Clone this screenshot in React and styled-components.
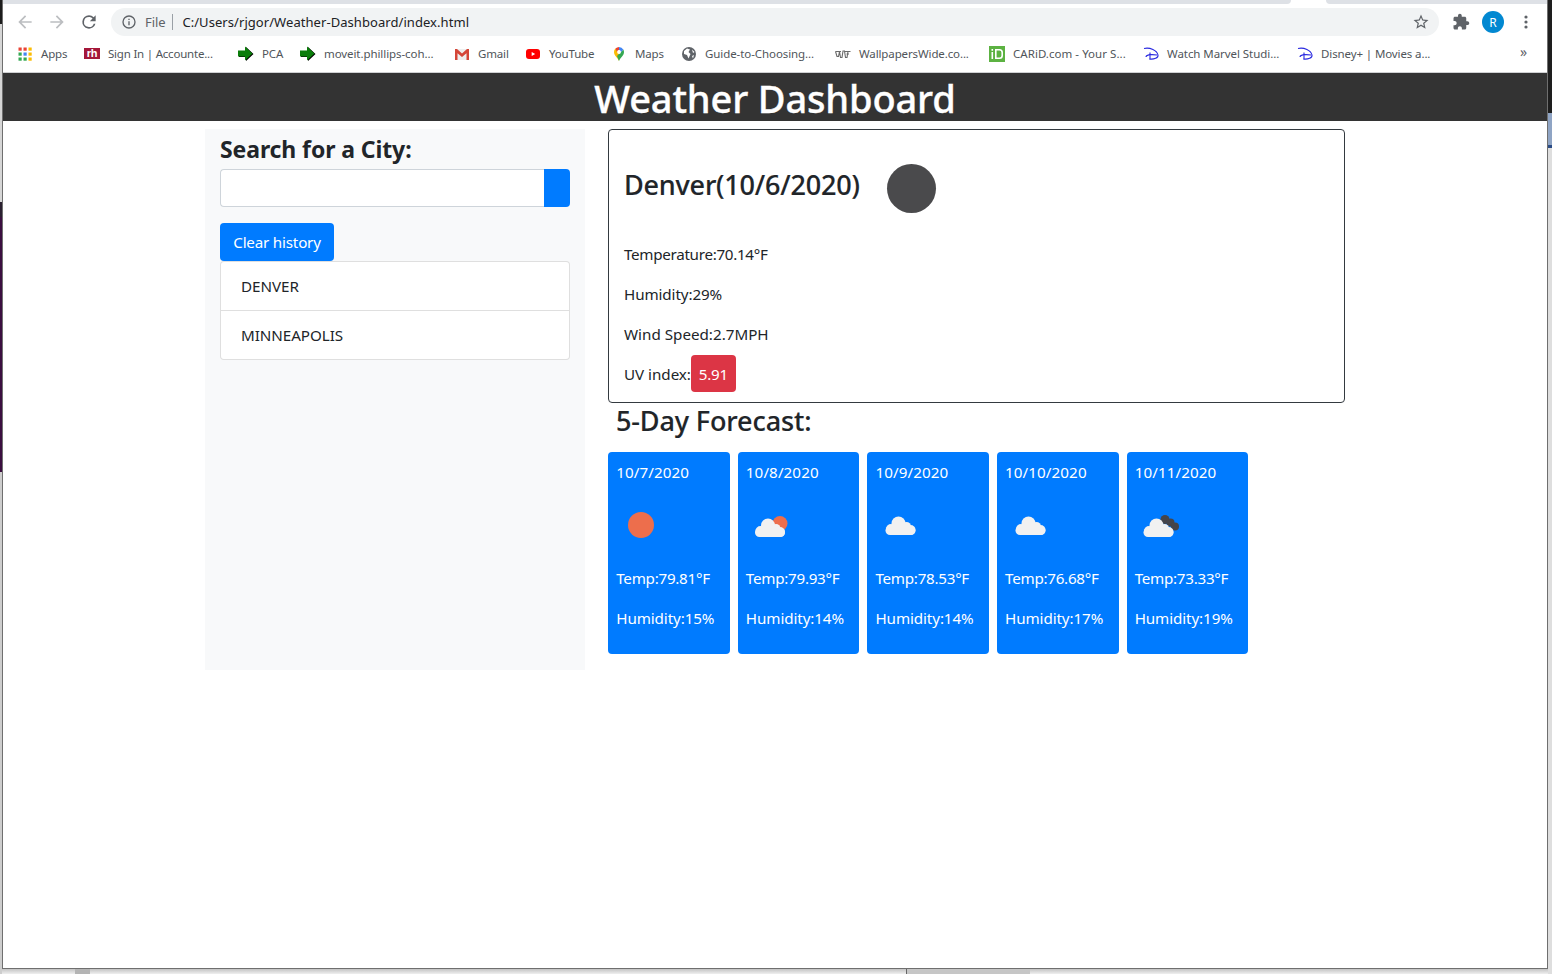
import React from "react";
import styled, { createGlobalStyle } from "styled-components";

const Global = createGlobalStyle`
  html, body { margin: 0; padding: 0; background: #fff; overflow: hidden; }
  * { box-sizing: border-box; }
  #root { height: 974px; width: 1552px; }
`;

const FONT = `"Noto Sans", "Open Sans", "Liberation Sans", sans-serif`;

const Desktop = styled.div`
  display: grid; grid-template-columns: 2px 1fr 4px; width: 1552px; height: 974px; font-family: ${FONT};
`;
const Edge = styled.div`display: flex; flex-direction: column; height: 974px;`;
const EdgePiece = styled.div`flex: ${p => p.$h ? `0 0 ${p.$h}px` : "1"}; background: ${p => p.$c};`;
const Center = styled.div`display: flex; flex-direction: column; height: 974px;`;
const Window = styled.div`
  flex: 1; display: flex; flex-direction: column; background: #fff; min-height: 0;
  border: 1px solid #6f6f6f; border-top: 0;
`;
const BottomEdge = styled.div`display: flex; height: 5px; background: linear-gradient(#c4c4c4, #efefef);`;
const BottomPiece = styled.div`
  flex: ${p => p.$w ? `0 0 ${p.$w}px` : "1"};
  background: ${p => p.$c || "transparent"};
  ${p => p.$line ? "border-left: 1px solid #666;" : ""}
`;

const TabStrip = styled.div`display: flex; height: 4px; background: #fff;`;
const TabFill = styled.div`
  flex: ${p => p.$w ? `0 0 ${p.$w}px` : "1"}; background: #dee1e6;
  border-radius: ${p => p.$r};
`;
const ActiveTab = styled.div`flex: 0 0 35px;`;

const Toolbar = styled.div`
  display: flex; align-items: center; height: 32px; padding: 4px 5px 0 6px; background: #fff;
`;
const ToolBtn = styled.div`
  flex: 0 0 32px; height: 28px; display: flex; align-items: center; justify-content: center;
  margin-left: ${p => p.$gap || 0}px;
`;
const Omnibox = styled.div`
  flex: 1; height: 28px; margin: 0 6px; padding: 0 9px 0 10px; border-radius: 14px; background: #f1f3f4;
  display: flex; align-items: center;
`;
const FileLabel = styled.span`
  font-size: 13px; color: #5f6368; margin-left: 8px; letter-spacing: -0.1px;
`;
const OmniSep = styled.span`width: 1px; height: 16px; background: #9aa0a6; margin: 0 9px 0 7px;`;
const Url = styled.span`font-size: 13px; color: #202124; flex: 1; white-space: nowrap; letter-spacing: 0.06px;`;
const Avatar = styled.div`
  width: 22px; height: 22px; border-radius: 50%; background: #0288d1; color: #fff; font-size: 12px;
  display: flex; align-items: center; justify-content: center;
`;

const Bookmarks = styled.div`
  display: flex; align-items: center; height: 37px; padding: 0 0 1px 14px; background: #fff;
  border-bottom: 1px solid #cfd0d2;
`;
const Bookmark = styled.div`
  flex: ${p => p.$w ? `0 0 ${p.$w}px` : "1"}; display: flex; align-items: center; gap: 8px; white-space: nowrap;
  font-size: 11.5px; color: #50555a; letter-spacing: ${p => p.$ls ?? -0.08}px;
`;
const BmIcon = styled.span`flex: 0 0 16px; width: 16px; height: 16px; display: flex; align-items: center; justify-content: center;`;
const More = styled.span`
  flex: 0 0 27px; font-size: 14px; color: #5f6368; line-height: 1; margin-bottom: 3px;
`;

const Header = styled.header`
  height: 48px; background: #333; color: #fff; text-align: center; font-size: 38px; font-weight: 500;
  line-height: 50px; letter-spacing: -0.15px; -webkit-text-stroke: 0.35px #fff;
`;
const Container = styled.main`
  width: 1140px; margin: 0 auto; padding-top: 8px; display: flex; align-items: flex-start; color: #212529;
`;
const Sidebar = styled.aside`
  flex: 0 0 380px; height: 541px; background: #f8f9fa; padding: 6px 15px 0;
`;
const SearchTitle = styled.h2`
  margin: 0 0 5px; font-size: 23px; line-height: 28px; font-weight: 700; letter-spacing: -0.1px; padding-bottom: 1px;
`;
const SearchRow = styled.div`display: flex; height: 38px; margin-bottom: 16px;`;
const SearchInput = styled.input`
  flex: 1; min-width: 0; border: 1px solid #ced4da; border-right: 0; border-radius: 4px 0 0 4px; background: #fff;
`;
const SearchButton = styled.button`
  flex: 0 0 26px; border: 0; padding: 0; background: #007bff; border-radius: 0 4px 4px 0;
`;
const ClearButton = styled.button`
  display: block; height: 38px; width: 114px; border: 0; padding: 0; border-radius: 4px; background: #007bff; color: #fff;
  font-family: ${FONT}; font-size: 15.2px; letter-spacing: -0.2px;
`;
const CityList = styled.ul`
  list-style: none; margin: 0; padding: 0; background: #fff; border: 1px solid rgba(0,0,0,.125); border-radius: 4px;
`;
const CityItem = styled.li`
  height: ${p => p.$last ? 48 : 49}px; padding: 0 20px; display: flex; align-items: center; font-size: 15.2px; letter-spacing: -0.05px;
  ${p => p.$last ? "" : "border-bottom: 1px solid rgba(0,0,0,.125);"}
`;

const Content = styled.section`flex: 1; padding-left: 23px; display: flex; flex-direction: column;`;
const CurrentCard = styled.div`
  height: 274px; border: 1px solid #343a40; border-radius: 4px; padding: 33px 16px 0 15px; display: flex; flex-direction: column;
`;
const TitleRow = styled.div`display: flex; align-items: center; height: 50px; margin-bottom: 29px;`;
const CityTitle = styled.h2`
  flex: 0 0 263px; margin: 0 0 6px; font-size: 27px; font-weight: 500; line-height: 34px; letter-spacing: -0.2px; white-space: nowrap;
  -webkit-text-stroke: 0.15px #212529;
`;
const Moon = styled.div`width: 49px; height: 49px; border-radius: 50%; background: #4a4a4c;`;
const Stat = styled.p`
  margin: 0 0 16px; height: 24px; line-height: 24px; font-size: 15.2px; letter-spacing: ${p => p.$ls}px; display: flex; align-items: center; white-space: nowrap;
`;
const UvBadge = styled.span`
  flex: none; display: flex; align-items: center; justify-content: center; width: 45px; height: 37px; margin-top: -1px; border-radius: 4px;
  background: #dc3545; color: #fff; letter-spacing: -0.25px;
`;
const ForecastTitle = styled.h2`
  margin: 0 0 13px 8px; height: 36px; font-size: 27px; font-weight: 500; line-height: 36px; letter-spacing: -0.12px;
  -webkit-text-stroke: 0.15px #212529;
`;
const ForecastGrid = styled.div`display: grid; grid-template-columns: repeat(5, 1fr); gap: 8px; width: 640px; margin-left: 0.25px;`;
const DayCard = styled.article`
  height: 202px; background: #007bff; color: #fff; border-radius: 4px; padding: 8px; font-size: 15.2px; white-space: nowrap;
`;
const DayLine = styled.p`margin: 0 0 16px; line-height: 24px; height: 24px; letter-spacing: ${p => p.$ls}px;`;
const DayIcon = styled.div`height: 50px; margin: 0 0 16px;`;

const Mat = ({ d, c = "#5f6368", s = 20 }) => (
  <svg width={s} height={s} viewBox="0 0 24 24" fill={c}><path d={d} /></svg>
);
const BACK = "M20 11H7.83l5.59-5.59L12 4l-8 8 8 8 1.41-1.41L7.83 13H20v-2z";
const FWD = "M4 11h12.17l-5.59-5.59L12 4l8 8-8 8-1.41-1.41L16.17 13H4v-2z";
const RELOAD = "M17.65 6.35A7.96 7.96 0 0 0 12 4a8 8 0 1 0 7.74 10h-2.08A6 6 0 1 1 12 6c1.66 0 3.14.69 4.22 1.78L13 11h7V4l-2.35 2.35z";
const INFO = "M11 7h2v2h-2V7zm0 4h2v6h-2v-6zm1-9a10 10 0 1 0 0 20 10 10 0 0 0 0-20zm0 18a8 8 0 1 1 0-16 8 8 0 0 1 0 16z";
const STAR = "M22 9.24l-7.19-.62L12 2 9.19 8.63 2 9.24l5.46 4.73L5.82 21 12 17.27 18.18 21l-1.63-7.03L22 9.24zM12 15.4l-3.76 2.27 1-4.28-3.32-2.88 4.38-.38L12 6.1l1.71 4.04 4.38.38-3.32 2.88 1 4.28L12 15.4z";
const PUZZLE = "M20.5 11H19V7c0-1.1-.9-2-2-2h-4V3.5C13 2.12 11.88 1 10.5 1S8 2.12 8 3.5V5H4c-1.1 0-1.99.9-1.99 2v3.8H3.5c1.49 0 2.7 1.21 2.7 2.7s-1.21 2.7-2.7 2.7H2V20c0 1.1.9 2 2 2h3.8v-1.5c0-1.49 1.21-2.7 2.7-2.7 1.49 0 2.7 1.21 2.7 2.7V22H17c1.1 0 2-.9 2-2v-4h1.5c1.38 0 2.5-1.12 2.5-2.5S21.88 11 20.5 11z";

const AppsIcon = () => {
  const seq = ["#ea4335","#ea4335","#fbbc04","#34a853","#4285f4","#fbbc04","#34a853","#34a853","#fbbc04"];
  return (
    <svg width="14" height="14" viewBox="0 0 14 14">
      {seq.map((c, i) => <rect key={i} x={(i % 3) * 5 + 0.5} y={Math.floor(i / 3) * 5 + 0.5} width="3.2" height="3.2" fill={c} />)}
    </svg>
  );
};
const RhIcon = () => (
  <svg width="16" height="16" viewBox="0 0 16 16">
    <rect y="2" width="16" height="11" fill="#a4173a" />
    <text x="8" y="11" textAnchor="middle" fontFamily="Liberation Sans" fontWeight="700" fontSize="11" fill="#fff">rh</text>
  </svg>
);
const ArrowIcon = () => (
  <svg width="16" height="16" viewBox="0 0 16 16">
    <path d="M1 5h7V1l7.5 7L8 15v-4H1z" fill="#000" />
    <path d="M0 4.5h7V0.5l7.5 7L7 14.5v-4H0z" fill="#0a7d0a" />
  </svg>
);
const GmailIcon = () => (
  <svg width="16" height="16" viewBox="0 0 16 16">
    <path d="M1 3h14v11H1z" fill="#eee" />
    <path d="M1 3h2l5 4.5L13 3h2v11h-2.5V7.2L8 11 3.500 7.200V14H1z" fill="#d44638" />
  </svg>
);
const YtIcon = () => (
  <svg width="16" height="16" viewBox="0 0 16 16">
    <rect x="1" y="3" width="14" height="10" rx="3" fill="#f00" />
    <path d="M6.700 6l3.500 2-3.500 2z" fill="#fff" />
  </svg>
);
const MapsIcon = () => (
  <svg width="16" height="16" viewBox="0 0 16 16">
    <path d="M8 15C6.500 11.500 3 9.500 3 6a5 5 0 0 1 1.500-3.500L8 6z" fill="#fbbc04" />
    <path d="M8 15c1.500-3.500 5-5.500 5-9a5 5 0 0 0-.7-2.500L6 10z" fill="#34a853" />
    <path d="M4.500 2.500A5 5 0 0 1 8 1v3L6 6z" fill="#ea4335" />
    <path d="M8 1a5 5 0 0 1 4.300 2.500L10 6 8 4z" fill="#4285f4" />
    <circle cx="8" cy="6" r="1.900" fill="#fff" />
  </svg>
);
const GlobeIcon = () => (
  <svg width="16" height="16" viewBox="0 0 16 16">
    <circle cx="8" cy="8" r="7" fill="#5f6368" />
    <path d="M3 5l3-2.500 3 1-1.500 2.500 2 2-2 4.500-1.500-3.500L3 8zM11 3.500l2.500 2.500-1.500 1zM11 10l2-1-1 3.500z" fill="#fff" />
  </svg>
);
const WpIcon = () => (
  <svg width="16" height="16" viewBox="0 0 16 16" fill="none" stroke="#6a6a6a" strokeWidth="1.100">
    <path d="M.5 5.500l1.500 5h1.500l1-5 1 6h1.500l1-6.500h1.500l1 6.500h1.500l1-6" />
    <path d="M.5 5.500h5.500M10 5.500h5.500M11.500 8h2.500" />
  </svg>
);
const IdIcon = () => (
  <svg width="16" height="16" viewBox="0 0 16 16">
    <rect width="16" height="16" fill="#5cb242" />
    <rect x="2.500" y="6" width="1.600" height="7" fill="#fff" />
    <rect x="2.500" y="3" width="1.600" height="1.800" fill="#fff" />
    <path d="M6 3h4.500A3.500 3.500 0 0 1 14 6.500v3a3.500 3.500 0 0 1-3.500 3.500H6zm1.600 1.600v6.800h2.900a1.900 1.900 0 0 0 1.900-1.900v-3a1.900 1.900 0 0 0-1.900-1.900z" fill="#fff" />
  </svg>
);
const DisneyIcon = () => (
  <svg width="16" height="16" viewBox="0 0 16 16" fill="none" stroke="#2a2ae0" strokeWidth="1.100">
    <path d="M1 2.500c6-1.500 13 2 14 6.500.500 3-4 4.500-8.500 4" />
    <path d="M7 6.500v7M3 11c0-2 4-3 11-2" />
  </svg>
);

const SunShape = ({ x, y, r }) => <circle cx={x} cy={y} r={r} fill="#ed6e4c" />;
const CloudShape = ({ dx = 0, dy = 0, fill = "#f1f1f1" }) => (
  <g transform={`translate(${dx} ${dy})`} fill={fill}>
    <rect x="0" y="10" width="30" height="9" rx="4.500" />
    <circle cx="5.500" cy="13" r="5" />
    <circle cx="13" cy="7.500" r="7" />
    <circle cx="21" cy="10.500" r="4.500" />
    <circle cx="25" cy="14" r="5" />
  </g>
);
const WeatherIcon = ({ kind }) => (
  <svg width="50" height="50" viewBox="0 0 50 50">
    {kind === "sun" && <SunShape x={25} y={25} r={13} />}
    {kind === "few" && <>
      <SunShape x={34} y={23.500} r={7.500} />
      <CloudShape dx={9} dy={18} />
    </>}
    {kind === "cloud" && <CloudShape dx={10.500} dy={16} />}
    {kind === "broken" && <>
      <circle cx="30" cy="19.500" r="4.500" fill="#45454a" />
      <circle cx="35.500" cy="22.500" r="4" fill="#45454a" />
      <circle cx="40" cy="26.500" r="4" fill="#45454a" />
      <CloudShape dx={8.500} dy={18} />
    </>}
  </svg>
);

const bookmarks = [
  { w: 67, icon: <AppsIcon />, text: "Apps", ls: -0.16 },
  { w: 154, icon: <RhIcon />, text: "Sign In | Accounte...", ls: -0.21 },
  { w: 62, icon: <ArrowIcon />, text: "PCA", ls: -0.16 },
  { w: 154, icon: <ArrowIcon />, text: "moveit.phillips-coh..." },
  { w: 71, icon: <GmailIcon />, text: "Gmail", ls: -0.16 },
  { w: 86, icon: <YtIcon />, text: "YouTube", ls: -0.16 },
  { w: 70, icon: <MapsIcon />, text: "Maps", ls: -0.16 },
  { w: 154, icon: <GlobeIcon />, text: "Guide-to-Choosing..." },
  { w: 154, icon: <WpIcon />, text: "WallpapersWide.co...", ls: -0.12 },
  { w: 154, icon: <IdIcon />, text: "CARiD.com - Your S...", ls: 0.04 },
  { w: 154, icon: <DisneyIcon />, text: "Watch Marvel Studi...", ls: -0.06 },
  { icon: <DisneyIcon />, text: "Disney+ | Movies a...", ls: -0.11 },
];

const days = [
  { date: "10/7/2020", kind: "sun", temp: "79.81", hum: 15 },
  { date: "10/8/2020", kind: "few", temp: "79.93", hum: 14 },
  { date: "10/9/2020", kind: "cloud", temp: "78.53", hum: 14 },
  { date: "10/10/2020", kind: "cloud", temp: "76.68", hum: 17 },
  { date: "10/11/2020", kind: "broken", temp: "73.33", hum: 19 },
];

const leftEdge = [[24, "#1c1c1c"], [178, "#d6d6d6"], [15, "#2a2030"], [255, "#3a0f3f"], [0, "#cdcdcd"]];
const rightEdge = [[113, "#1e1e1e"], [32, "#8fa4c4"], [3, "#2b4c86"], [0, "#dedede"]];

export default function App() {
  return (
    <>
      <Global />
      <Desktop>
        <Edge>{leftEdge.map(([h, c], i) => <EdgePiece key={i} $h={h} $c={c} />)}</Edge>
        <Center>
          <Window>
            <TabStrip>
              <TabFill $r="0 0 6px 0" />
              <ActiveTab />
              <TabFill $w={221} $r="0 0 0 6px" />
            </TabStrip>
            <Toolbar>
              <ToolBtn><Mat d={BACK} c="#bcbec1" /></ToolBtn>
              <ToolBtn><Mat d={FWD} c="#bcbec1" /></ToolBtn>
              <ToolBtn><Mat d={RELOAD} c="#5f6368" /></ToolBtn>
              <Omnibox>
                <Mat d={INFO} c="#5f6368" s={16} />
                <FileLabel>File</FileLabel>
                <OmniSep />
                <Url>C:/Users/rjgor/Weather-Dashboard/index.html</Url>
                <Mat d={STAR} c="#5f6368" s={18} />
              </Omnibox>
              <ToolBtn><Mat d={PUZZLE} c="#5f6368" s={18} /></ToolBtn>
              <ToolBtn><Avatar>R</Avatar></ToolBtn>
              <ToolBtn $gap={1}>
                <svg width="4" height="14" viewBox="0 0 4 14" fill="#5f6368">
                  <circle cx="2" cy="2" r="1.600" /><circle cx="2" cy="7" r="1.600" /><circle cx="2" cy="12" r="1.600" />
                </svg>
              </ToolBtn>
            </Toolbar>
            <Bookmarks>
              {bookmarks.map(b => (
                <Bookmark key={b.text} $w={b.w} $ls={b.ls}><BmIcon>{b.icon}</BmIcon>{b.text}</Bookmark>
              ))}
              <More>»</More>
            </Bookmarks>
            <Header>Weather Dashboard</Header>
            <Container>
              <Sidebar>
                <SearchTitle>Search for a City:</SearchTitle>
                <SearchRow>
                  <SearchInput aria-label="City" />
                  <SearchButton aria-label="Search" />
                </SearchRow>
                <ClearButton>Clear history</ClearButton>
                <CityList>
                  <CityItem>DENVER</CityItem>
                  <CityItem $last>MINNEAPOLIS</CityItem>
                </CityList>
              </Sidebar>
              <Content>
                <CurrentCard>
                  <TitleRow>
                    <CityTitle>Denver(10/6/2020)</CityTitle>
                    <Moon />
                  </TitleRow>
                  <Stat $ls={-0.3}>Temperature:70.14°F</Stat>
                  <Stat $ls={-0.1}>Humidity:29%</Stat>
                  <Stat $ls={0}>Wind Speed:2.7MPH</Stat>
                  <Stat $ls={-0.03}>UV index:<UvBadge>5.91</UvBadge></Stat>
                </CurrentCard>
                <ForecastTitle>5-Day Forecast:</ForecastTitle>
                <ForecastGrid>
                  {days.map(d => (
                    <DayCard key={d.date}>
                      <DayLine $ls={0.08}>{d.date}</DayLine>
                      <DayIcon><WeatherIcon kind={d.kind} /></DayIcon>
                      <DayLine $ls={-0.27}>Temp:{d.temp}°F</DayLine>
                      <DayLine $ls={-0.1}>Humidity:{d.hum}%</DayLine>
                    </DayCard>
                  ))}
                </ForecastGrid>
              </Content>
            </Container>
          </Window>
          <BottomEdge>
            <BottomPiece $w={73} />
            <BottomPiece $w={15} $c="#b4b4b4" />
            <BottomPiece $w={816} />
            <BottomPiece $w={124} $c="#c6c6c6" $line />
            <BottomPiece />
          </BottomEdge>
        </Center>
        <Edge>{rightEdge.map(([h, c], i) => <EdgePiece key={i} $h={h} $c={c} />)}</Edge>
      </Desktop>
    </>
  );
}
